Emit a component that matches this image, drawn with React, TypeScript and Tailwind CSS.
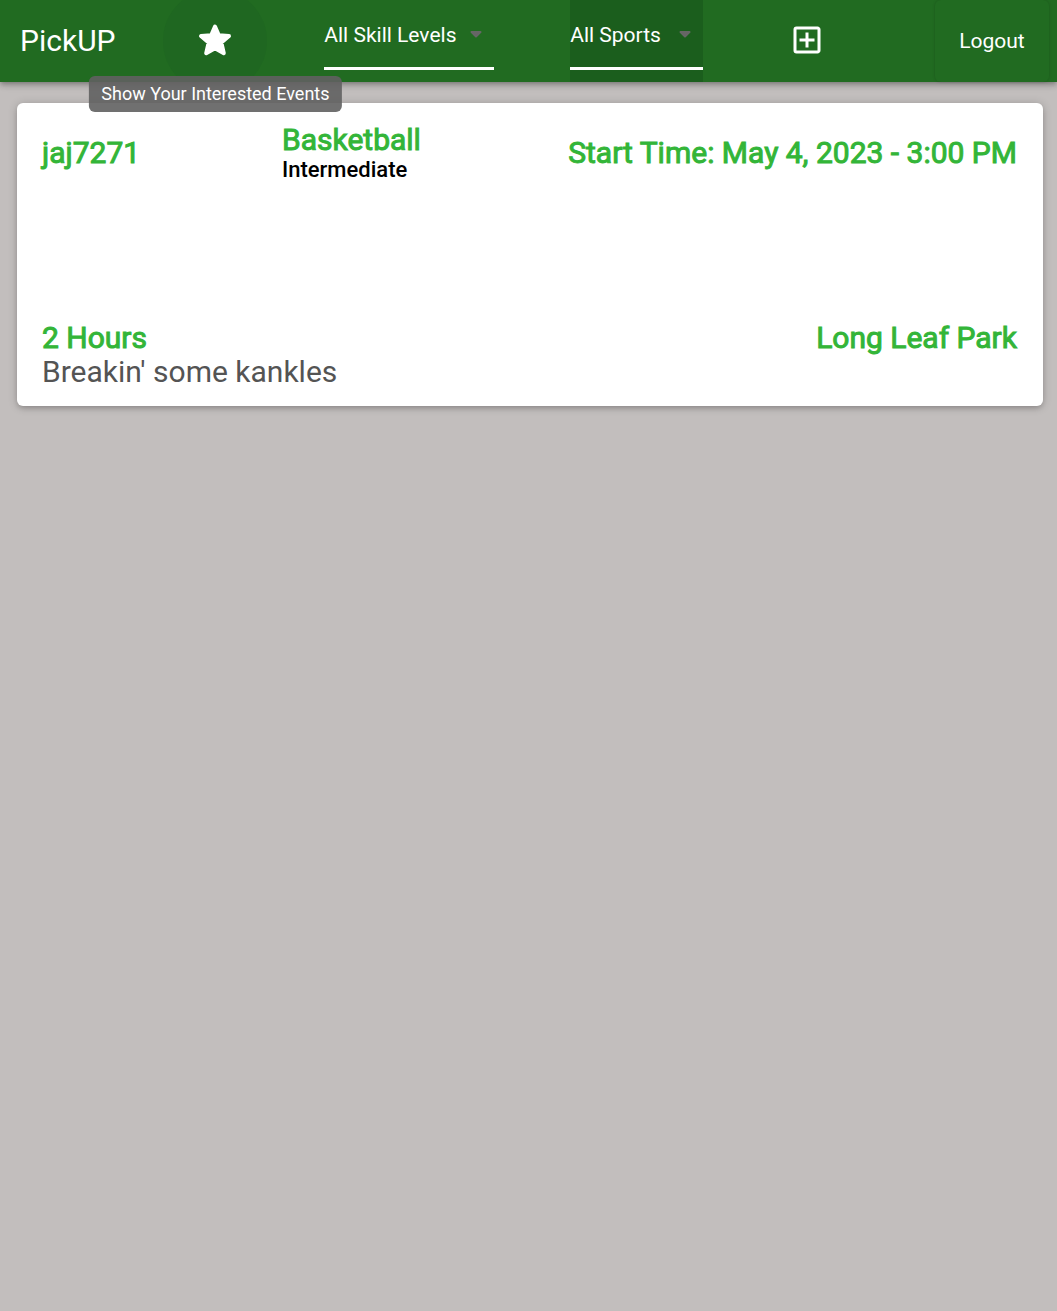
import React from "react";
import { MdOutlineAddBox } from "react-icons/md";

function StarIcon() {
  return (
    <svg viewBox="0 0 36 36" className="size-9" aria-hidden="true">
      <path
        d="M18 3.5 L21.8 12.3 L32 13 L24.4 19.6 L26.8 30.2 L18 25.2 L9.2 30.2 L11.6 19.6 L4 13 L14.2 12.3 Z"
        fill="currentColor"
        stroke="currentColor"
        strokeWidth="4"
        strokeLinejoin="round"
      />
    </svg>
  );
}

function Filter({
  label,
  options,
  className,
}: {
  label: string;
  options: string[];
  className: string;
}) {
  return (
    <div className={"relative h-full shrink-0 " + className}>
      <select
        aria-label={label}
        className="h-[70px] w-full appearance-none border-b-3 border-white bg-transparent pt-0.5 text-[21px] leading-7 text-white outline-none"
      >
        {options.map((o) => (
          <option key={o} className="text-black">
            {o}
          </option>
        ))}
      </select>
      <svg
        viewBox="0 0 12 8"
        className="pointer-events-none absolute top-[31px] right-3 h-2 w-3 text-[#666666]"
        aria-hidden="true"
      >
        <path
          d="M1.5 1 H10.5 L6 5.5 Z"
          fill="currentColor"
          stroke="currentColor"
          strokeWidth="2"
          strokeLinejoin="round"
        />
      </svg>
    </div>
  );
}

function Header() {
  return (
    <header className="relative z-10 flex h-[82px] items-center justify-between bg-[#216b21] pr-2 pl-5 text-white shadow-[0_2px_4px_-1px_rgba(0,0,0,0.2),0_4px_5px_0_rgba(0,0,0,0.14),0_1px_10px_0_rgba(0,0,0,0.12)]">
      <span className="text-[30px] leading-9">PickUP</span>
      <div className="relative h-full">
        <div className="flex h-full w-[104px] items-center justify-center overflow-hidden">
          <button
            type="button"
            aria-label="Show Your Interested Events"
            className="flex size-[104px] shrink-0 items-center justify-center rounded-full bg-[#1f6721]"
          >
            <StarIcon />
          </button>
        </div>
        <div
          role="tooltip"
          className="absolute top-[76px] left-1/2 -translate-x-1/2 rounded-md bg-[#616161]/90 px-3 text-lg leading-9 whitespace-nowrap"
        >
          Show Your Interested Events
        </div>
      </div>
      <Filter
        label="Skill level"
        options={["All Skill Levels", "Beginner", "Intermediate", "Advanced"]}
        className="ml-[9px] w-[170px]"
      />
      <Filter
        label="Sport"
        options={["All Sports", "Basketball", "Soccer", "Tennis"]}
        className="ml-7 w-[133px] bg-[#1b5e1d]"
      />
      <button
        type="button"
        aria-label="Create event"
        className="ml-1 flex h-full w-[104px] items-center justify-center pb-0.5"
      >
        <MdOutlineAddBox className="size-9" />
      </button>
      <button
        type="button"
        className="ml-7 h-full w-[114px] rounded-md pt-0.5 text-[21px] shadow-[0_0_3px_0_rgba(0,0,0,0.2)]"
      >
        Logout
      </button>
    </header>
  );
}

const title = "text-[30px] text-[#33b538] [-webkit-text-stroke:1px_#33b538]";

export default function App() {
  return (
    <div className="min-h-screen bg-[#c2bebd] font-['Roboto',sans-serif]">
      <Header />
      <main className="pt-[21px] pr-3.5 pl-[17px]">
        <article className="rounded-md bg-white pr-[26px] pl-[25px] pt-5 pb-[17px] shadow-[0_3px_5px_-1px_rgba(0,0,0,0.16),0_1px_10px_0_rgba(0,0,0,0.2)]">
          <div className="flex h-[198px] items-start">
            <h2 className={title + " w-60 pt-3 leading-9"}>jaj7271</h2>
            <div>
              <h2 className={title + " leading-[34px]"}>Basketball</h2>
              <p className="text-[22px] leading-[26px] font-medium text-black">
                Intermediate
              </p>
            </div>
            <h2 className={title + " ml-auto pt-3 leading-9"}>
              Start Time: May 4, 2023 - 3:00 PM
            </h2>
          </div>
          <div className="flex justify-between">
            <h2 className={title + " leading-[34px]"}>2 Hours</h2>
            <h2 className={title + " leading-[34px]"}>Long Leaf Park</h2>
          </div>
          <p className="text-[30px] leading-[34px] text-[#545454]">
            Breakin' some kankles
          </p>
        </article>
      </main>
    </div>
  );
}
